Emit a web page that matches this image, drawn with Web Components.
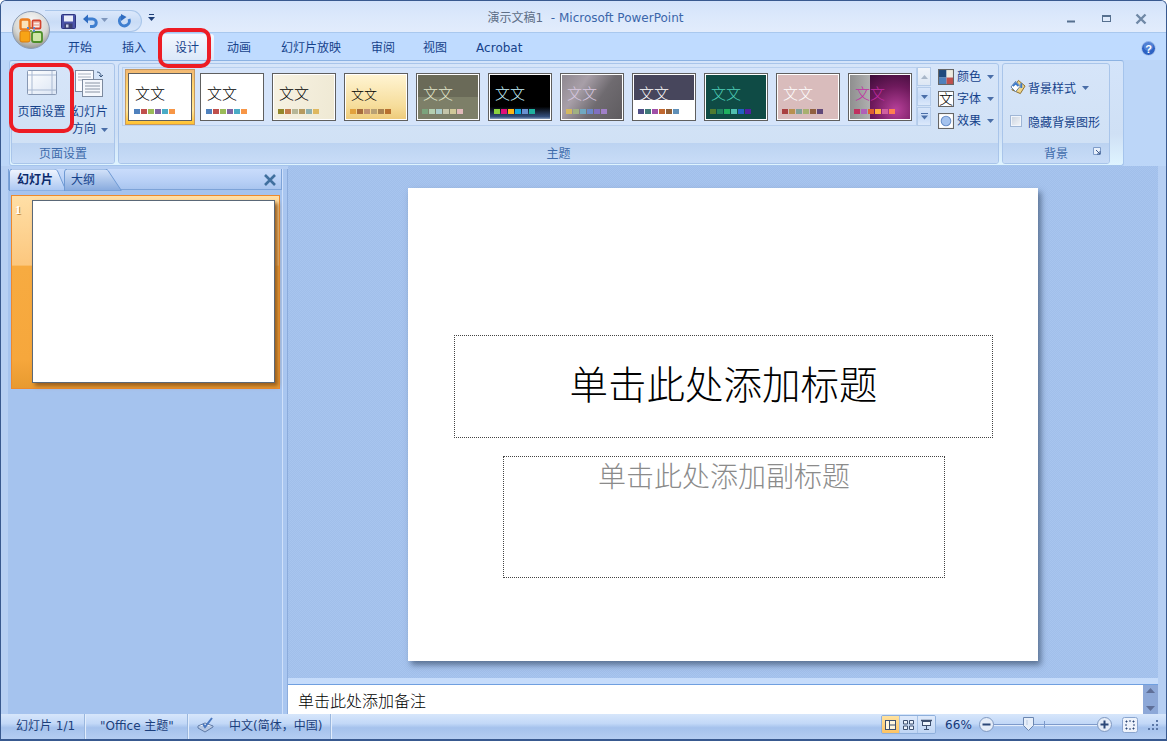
<!DOCTYPE html>
<html lang="zh-CN"><head><meta charset="utf-8"><title>演示文稿1 - Microsoft PowerPoint</title>
<style>html,body{margin:0;padding:0;background:#fff;overflow:hidden}body{font:12px "DejaVu Sans","Noto Sans CJK SC",sans-serif}</style>
</head><body>
<ppt-app></ppt-app>
<script>
const FONT='"DejaVu Sans","Noto Sans CJK SC",sans-serif';
function def(name,css,html,extra){
  const t=document.createElement('template');
  t.innerHTML='<style>'+css+'</style>'+html;
  customElements.define(name,class extends HTMLElement{
    constructor(){super();this.attachShadow({mode:'open'}).appendChild(t.content.cloneNode(true));}
    connectedCallback(){if(extra)extra(this);}
  });
}
const arrow='<svg width="7" height="4" viewBox="0 0 7 4"><path d="M0 0h7L3.5 4z" fill="#4a6ea8"/></svg>';

def('title-bar',`:host{display:grid;grid-template-columns:1fr auto 1fr;height:31px;align-items:center;background:linear-gradient(#d2e2fa,#dbe8fb 45%,#e2ecfc 100%);border-bottom:1px solid #a9c8ee;box-sizing:content-box;font-size:12px}
.t{color:#5d6e86;white-space:nowrap;padding:0 0 1px 4px}.t b{font-weight:400;color:#3b66aa}
.l{padding-left:44px;display:flex;align-items:center;gap:6px;align-self:end}
.q{display:flex;align-items:center;height:22px;width:97px;box-sizing:border-box;padding-left:16px;gap:0;border:1px solid #a9c6ea;border-left:0;border-radius:0 11px 11px 0;background:linear-gradient(#dbe8fb,#c9dcf6 55%,#d6e5fa);position:relative}
.r{display:flex;justify-content:flex-end;align-items:center;padding:5px 19px 0 0;gap:22px}`,
`<div class="l"><div class="q">
<svg width="15" height="15" viewBox="0 0 15 15" style="margin-right:7px"><rect x=".5" y=".5" width="14" height="14" rx="1" fill="#4b54a8" stroke="#2d3580"/><rect x="3" y="1.5" width="9" height="6" fill="#e9edf8"/><rect x="3.5" y="9.5" width="8" height="5" fill="#3a3f70"/><rect x="5" y="10.5" width="2.5" height="3" fill="#cdd3ea"/></svg>
<svg width="15" height="15" viewBox="0 0 15 15"><path d="M4 5h5.500a3.700 3.700 0 0 1 0 7.500H7" fill="none" stroke="#3f7fd0" stroke-width="3"/><path d="M0 5l5-4.500v9z" fill="#2f6cc0"/></svg>
<span style="margin:0 9px 2px 3px;display:flex">${arrow.replace('#4a6ea8','#7f97bd')}</span>
<svg width="15" height="15" viewBox="0 0 15 15"><path d="M5 2.500a5 5 0 1 0 7 2.500" fill="none" stroke="#3f7fd0" stroke-width="3"/><path d="M7 0v7L1.500 3z" fill="#2f6cc0" transform="matrix(-1 0 0 1 11 0)"/></svg>
</div>
<svg width="7" height="8" viewBox="0 0 7 8" style="margin-bottom:7px"><rect x="1" y="0" width="5" height="1" fill="#1f3f78"/><path d="M0 3h7L3.500 7z" fill="#1f3f78"/></svg></div>
<div class="t">演示文稿1 &nbsp;<b>- Microsoft PowerPoint</b></div>
<div class="r">
<svg width="12" height="12" viewBox="0 0 12 12"><rect x="1" y="7.500" width="8" height="2" fill="#56708f"/></svg>
<svg width="13" height="12" viewBox="0 0 13 12"><rect x="2.500" y="2.500" width="8" height="6" fill="#dfeafa" stroke="#56708f"/><rect x="2" y="2" width="9" height="2" fill="#56708f"/></svg>
<svg width="12" height="12" viewBox="0 0 12 12"><path d="M1.500 1.500l9 9M10.500 1.500l-9 9" stroke="#6f88a6" stroke-width="2.400"/></svg>
</div>`);

def('ribbon-tab',`:host{display:block;padding:4px 15px 0;line-height:23px;color:#15428b;font-size:12px;white-space:nowrap;height:27px;box-sizing:border-box}
:host([active]){background:linear-gradient(#f4f8fe,#dbe8f9);border-radius:3px 3px 0 0;margin-top:1px;padding-top:3px;height:26px}`,`<slot></slot>`);

def('tab-row',`:host{display:flex;align-items:flex-end;height:27px;padding-left:52px;background:#bfdbff;position:relative}
.h{margin-left:auto;margin-right:10px;margin-top:3px;align-self:center;display:flex}`,
`<slot></slot><svg class="h" width="15" height="15" viewBox="0 0 15 15"><circle cx="7.500" cy="7.500" r="7" fill="#2d62c4" stroke="#bcd3f2"/><circle cx="7.500" cy="5" r="5" fill="#6f9ae4" opacity=".55"/><text x="7.500" y="11.500" font-size="11" font-weight="700" font-family="Liberation Sans" text-anchor="middle" fill="#fff">?</text></svg>`);

def('ribbon-group',`:host{display:flex;flex-direction:column;box-sizing:border-box;height:101px;border:1px solid #a9c5ea;border-radius:3px;background:linear-gradient(#d6e5f9,#cfe0f4);position:relative;overflow:hidden}
.b{flex:1;min-height:0;display:flex}
.l{height:20px;box-sizing:border-box;padding-top:2px;line-height:19px;text-align:center;color:#3e6bab;font-size:12px;background:linear-gradient(#bcd3f1,#c8dcf7);flex:none}`,
`<div class="b"><slot></slot></div><div class="l"><slot name="label"></slot></div>`);

def('big-button',`:host{display:flex;flex-direction:column;align-items:center;padding-top:6px;color:#15428b;font-size:12px;line-height:17px;box-sizing:border-box;white-space:nowrap}
.i{height:27px;display:flex;margin-bottom:7px}`,`<div class="i"><slot name="icon"></slot></div><slot></slot>`);

def('theme-thumb',`:host{display:block;flex:none;width:64px;height:48px;box-sizing:border-box;border:1px solid #5f5f5f;padding:1px;background:#fff;position:relative}
:host([selected])::before{content:"";position:absolute;inset:-5px -4px -5px -4px;background:linear-gradient(#f2b873,#ffd56e 30%,#ffe59a 75%,#ffc12e);border:1px solid #c69a62;box-sizing:border-box;z-index:-1}
.p{height:44px;box-sizing:border-box;padding:11px 4px 0 4px;overflow:hidden;background:var(--bg,#fff);position:relative}
.x{font-size:var(--fs,15px);line-height:17px;height:17px;margin-left:1px;color:var(--ink,#000);white-space:nowrap;position:relative;font-weight:300}
.s{display:flex;gap:1px;margin:6px 0 0 0;position:relative}
i{display:block;width:6px;height:5px}`,
`<div class="p"><div class="x">文文</div><div class="s"></div></div>`,
el=>{const r=el.shadowRoot;const c=(el.getAttribute('sw')||'').split(',');
 r.querySelector('.s').innerHTML=c.map(v=>'<i style="background:'+v+'"></i>').join('');
 const p=r.querySelector('.p');p.style.setProperty('--bg',el.getAttribute('bg')||'#fff');
 p.style.setProperty('--ink',el.getAttribute('ink')||'#000');
 if(el.getAttribute('fs'))p.style.setProperty('--fs',el.getAttribute('fs'));
});

def('scroll-btns',`:host{display:flex;flex-direction:column;width:14px;height:59px;gap:1px;flex:none}
div{flex:1;box-sizing:border-box;border:1px solid #b4cbe9;display:flex;align-items:center;justify-content:center;background:linear-gradient(#d8e6fa,#c6daf6 55%,#dce9fb)}
.a{background:linear-gradient(#f0f4fa,#dde7f4)}
svg{display:block}`,
`<div class="a"><svg width="7" height="4"><path d="M0 4h7L3.500 0z" fill="#a9b7c9"/></svg></div>
<div><svg width="7" height="4"><path d="M0 0h7L3.500 4z" fill="#4a6ea8"/></svg></div>
<div><svg width="7" height="7"><rect width="7" height="1" fill="#4a6ea8"/><path d="M0 2.500h7L3.500 6.500z" fill="#4a6ea8"/></svg></div>`);

def('theme-opt',`:host{display:flex;align-items:center;height:17px;margin-bottom:5px;color:#15428b;font-size:12px;white-space:nowrap}
.t{margin:0 0 3px 3px;width:24px}.a{margin-left:6px;display:flex}`,
`<slot name="icon"></slot><span class="t"><slot></slot></span><span class="a">${arrow}</span>`);

def('panel-tab',`:host{display:block;position:relative;height:21px;box-sizing:border-box;line-height:23px;font-size:12px;padding-left:8px;color:#15428b;flex:none}
svg{position:absolute;left:0;top:0;z-index:-1}
:host([active]){font-weight:700;color:#0c2a6c}`,`<svg width="70" height="22" viewBox="0 0 70 22"><path class="p" d="M.5 22V3a3 3 0 0 1 3-3H40c3 0 4 1 5 3l12 18v1z" fill="url(#g)" stroke="#6f9ad4"/><defs><linearGradient id="g" x1="0" y1="0" x2="0" y2="1"><stop class="a" offset="0"/><stop class="b" offset="1"/></linearGradient></defs></svg><slot></slot>`,
el=>{const r=el.shadowRoot,on=el.hasAttribute('active');
 r.querySelector('.a').setAttribute('stop-color',on?'#f2f6fe':'#d5e4fa');
 r.querySelector('.b').setAttribute('stop-color',on?'#a9c6f2':'#86a9dd');
 if(on)r.querySelector('.p').setAttribute('d','M.5 22V3a3 3 0 0 1 3-3H45c2 0 3 1 4 3l6 14c1 2 3 4 7 5z');
});

def('slide-panel',`:host{display:flex;flex-direction:column;width:274px;flex:none;background:#a5c3ee;position:relative}
.tabs{display:flex;height:21px;box-sizing:border-box;background:linear-gradient(#c9dcfb,#b8d0f6 60%,#a9c5ef);border:1px solid #7da3d8;border-width:0 1px 1px 1px;position:relative;z-index:0;align-items:flex-start;flex:none}
.x{margin:5px 5px 0 auto;display:flex}
.thumb{margin:5px 2px 0 3px;height:194px;box-sizing:border-box;border:1px solid #ee8a2c;background:linear-gradient(#ffdfa6,#fcc77e 36%,#f7ab41 36.500%,#f6a73c 85%,#e89a30);display:flex;padding:4px 4px 0 3px;position:relative;flex:none}
.n{width:17px;color:#fff;font:700 12px/20px "Liberation Serif",serif;text-shadow:1px 1px 0 #c98a3a;flex:none}
.s{width:243px;height:183px;box-sizing:border-box;background:#fff;border:1px solid #5a6878;box-shadow:3px 3px 4px #9a5f1e}`,
`<div class="tabs"><panel-tab active style="width:55px">幻灯片</panel-tab><panel-tab style="width:58px;padding-left:7px">大纲</panel-tab>
<svg class="x" width="12" height="12" viewBox="0 0 12 12"><path d="M1 1l10 10M11 1L1 11" stroke="#40709f" stroke-width="2.600"/></svg></div>
<div class="thumb"><div class="n">1</div><div class="s"></div></div>`);

def('pane-divider',`:host{display:block;width:6px;flex:none;box-sizing:border-box;background:#a9c6f0;border-left:1px solid #cfe0fa;border-right:1px solid #8cacdc}`,``);

def('slide-canvas',`:host{display:block;flex:1;min-height:0;padding-top:22px;box-sizing:border-box;background:#a3c1ec repeating-conic-gradient(#a1bfea 0 25%,#a8c5ef 0 50%) 0 0/2px 2px}
.s{width:630px;height:473px;margin:0 auto;background:#fff;box-shadow:3px 4px 6px rgba(50,70,100,.65);display:flex;flex-direction:column;padding-top:147px;box-sizing:border-box}
.a,.b{border:1px dotted #444;box-sizing:border-box;text-align:center;white-space:nowrap}
.a{margin-left:46px;width:539px;height:103px;line-height:100px;font-size:38.500px;color:#000;font-weight:300}
.b{margin:18px 0 0 95px;width:442px;height:122px;font-size:28px;line-height:42px;color:#8b8b8b;font-weight:300}`,
`<div class="s"><div class="a">单击此处添加标题</div><div class="b">单击此处添加副标题</div></div>`);

def('notes-pane',`:host{display:flex;height:36px;flex:none;flex-direction:column}
.d{height:7px;box-sizing:border-box;background:#c6dcfb;border-bottom:1px solid #6f9fe0}
.m{flex:1;display:flex;min-height:0}
.t{flex:1;background:#fff;font-size:16px;line-height:33px;padding-left:10px;color:#000;font-weight:300;overflow:hidden}
.v{width:15px;background:#8da8d8;display:flex;flex-direction:column;align-items:center;justify-content:space-between;padding:3px 0;box-sizing:border-box}`,
`<div class="d"></div><div class="m"><div class="t">单击此处添加备注</div><div class="v"><svg width="9" height="5"><path d="M0 5h9L4.500 0z" fill="#5f6f98"/></svg><svg width="9" height="5"><path d="M0 0h9L4.500 5z" fill="#5f6f98"/></svg></div></div>`);

def('status-cell',`:host{display:flex;align-items:center;box-sizing:border-box;height:100%;padding-bottom:4px;border-right:1px solid #9ab7de;box-shadow:1px 0 0 #e2edfc;color:#1c3f7c;font-size:12px;white-space:nowrap;flex:none}`,`<slot></slot>`);

def('status-bar',`:host{display:flex;height:27px;flex:none;box-sizing:border-box;border-bottom:2px solid #38598f;background:linear-gradient(#d7e6fb,#c2d8f7 38%,#a5c2ec 55%,#b4cdf2);font-size:12px;align-items:stretch}
.r{margin-left:auto;display:flex;align-items:center;padding:0 8px 4px 0;color:#15387a}
.v{display:flex;height:19px;width:55px;border:1px solid #8fb0dc;border-radius:2px;box-sizing:border-box;margin-right:9px;overflow:hidden}
.v span{flex:1;display:flex;align-items:center;justify-content:center;border-right:1px solid #a6c2e6;background:linear-gradient(#dfeafb,#bfd5f4)}
.v span:first-child{background:linear-gradient(#ffe3a0,#fcc262)}
.v span:last-child{border:0}
.p{width:27px;margin-right:7px;letter-spacing:.1px}
.z{display:flex;align-items:center;position:relative}
.tr{width:105px;height:1px;background:#7d9acb;position:relative;margin:0 -1px;box-shadow:0 1px 0 #e4eefc}
.tk{position:absolute;left:51px;top:-3px;width:1px;height:7px;background:#7d9acb}
.th{position:absolute;left:30px;top:-7px}
.f{margin:0 9px 0 10px;display:flex}
.g{display:flex}`,
`<slot></slot>
<div class="r">
<div class="v"><span><svg width="11" height="10"><rect x=".5" y=".5" width="10" height="9" fill="#fff6dc" stroke="#3d4f6e"/><path d="M4.500 0v10M4.500 5H11" stroke="#3d4f6e"/></svg></span>
<span><svg width="11" height="10"><path d="M.5.500h4v3.500h-4zM6.500.500h4v3.500h-4zM.5 6h4v3.500h-4zM6.500 6h4v3.500h-4z" fill="#eef4fc" stroke="#3d4f6e"/></svg></span>
<span><svg width="11" height="11"><path d="M0 1.500h11" stroke="#3d4f6e" stroke-width="1.600"/><rect x="1.500" y="2.500" width="8" height="4" fill="#eef4fc" stroke="#3d4f6e"/><path d="M5.500 7v3M3 10.500h5" stroke="#3d4f6e"/></svg></span></div>
<span class="p">66%</span>
<div class="z">
<svg width="15" height="15" style="position:relative;z-index:1"><circle cx="7.500" cy="7.500" r="7" fill="#e4ecf8" stroke="#7f98c0"/><rect x="3.500" y="6.500" width="8" height="2" fill="#2c4878"/></svg>
<div class="tr"><div class="tk"></div><svg class="th" width="11" height="14" viewBox="0 0 11 14"><path d="M.5.500h10v8l-5 5-5-5z" fill="#e6eef9" stroke="#6b86b0"/><path d="M4 3v5" stroke="#b8c8e0"/></svg></div>
<svg width="15" height="15" style="position:relative;z-index:1"><circle cx="7.500" cy="7.500" r="7" fill="#e4ecf8" stroke="#7f98c0"/><path d="M3.500 7.500h8M7.500 3.500v8" stroke="#2c4878" stroke-width="2"/></svg>
</div>
<span class="f"><svg width="16" height="16"><rect x=".5" y=".5" width="15" height="15" rx="2" fill="#eef3fb" stroke="#8ba6cf"/><path d="M8 3v2M8 11v2M3 8h2M11 8h2M4 4h1v1H4zM11 4h1v1h-1zM4 11h1v1H4zM11 11h1v1h-1z" stroke="#2c4878"/></svg></span>
<span class="g"><svg width="11" height="11"><path d="M9 1h2v2H9zM9 5h2v2H9zM9 9h2v2H9zM5 5h2v2H5zM5 9h2v2H5zM1 9h2v2H1z" fill="#5a78a8"/></svg></span>
</div>`);

def('red-mark',`:host{display:block;position:absolute;box-sizing:border-box;border:4px solid #ed1c24;border-radius:10px;pointer-events:none;z-index:5}`,``);

def('office-orb',`:host{display:block;position:absolute;left:11px;top:10px;width:38px;height:38px;z-index:4}`,
`<svg width="38" height="38" viewBox="0 0 38 38"><defs><radialGradient id="o" cx=".5" cy=".3" r=".75"><stop offset="0" stop-color="#fafafa"/><stop offset=".6" stop-color="#d8d8d4"/><stop offset="1" stop-color="#8b8b86"/></radialGradient></defs>
<circle cx="19" cy="19" r="18.500" fill="url(#o)" stroke="#8a9bb4"/>
<rect x="8.500" y="8.500" width="9" height="10" rx="2" fill="#fbe3b8" stroke="#ec7d1e" stroke-width="2.400"/>
<rect x="20.500" y="9.500" width="8" height="8" rx="1" fill="#fbeee6" stroke="#d2442e" stroke-width="1.800"/>
<rect x="8" y="20" width="10" height="11" rx="2" fill="#f7a416" stroke="#d77a10"/>
<rect x="20" y="21" width="10" height="10" rx="2" fill="#cfe6a8" stroke="#4d8e2a" stroke-width="1.800"/>
<path d="M21 11h6M21 14h6" stroke="#e08a78"/><rect x="15" y="16" width="2" height="2" fill="#5b89c8"/><rect x="18" y="16" width="2" height="2" fill="#c9703c"/><rect x="21" y="16" width="2" height="2" fill="#5b89c8"/><rect x="18" y="19" width="2" height="2" fill="#7aa84a"/><rect x="21" y="19" width="2" height="2" fill="#5b89c8"/></svg>`);

def('ppt-app',`:host{display:flex;flex-direction:column;width:1167px;height:741px;box-sizing:border-box;border:1px solid #38598f;border-bottom:0;border-radius:6px 6px 0 0;overflow:hidden;background:#bcd6f8;position:relative;font-family:${FONT}}
.rb{height:106px;margin:0 42px 0 8px;flex:none;box-sizing:border-box;border:1px solid #a5c4ec;border-top-color:#8db3e2;border-radius:3px;background:linear-gradient(#d4e4fa,#cfe0f5 70%,#dff4ff);display:flex;padding:2px 0 0 1px;gap:3px}
.ws{flex:1;min-height:0;display:flex;padding:3px 8px 0 7px;background:#b6cff3}
.mn{flex:1;min-width:0;display:flex;flex-direction:column;margin-top:-3px}
.gal{margin:3px 0 0 3px;width:795px;height:59px;box-sizing:border-box;border:1px solid #b9d0ee;background:#d5e4fa;display:flex;gap:8px;padding:5px 0 0 5px;position:relative;z-index:0}
.opts{margin:4px 0 0 7px;width:58px}
.ic{display:block;width:16px;height:16px;flex:none}
.bgw{padding:15px 0 0 7px;color:#15428b;white-space:nowrap;font-size:12px}
.bgr{display:flex;align-items:center;height:16px}
.bgr .t{margin-left:2px}
.ck{display:block;width:12px;height:12px;box-sizing:border-box;border:1px solid #9fb6d6;background:linear-gradient(135deg,#c9d2de,#f5f7fa);box-shadow:inset 0 0 0 1px #f1f5fb;margin-right:6px}
.lch{position:absolute;right:7px;bottom:7px;display:block}`,
`<title-bar></title-bar>
<tab-row><ribbon-tab>开始</ribbon-tab><ribbon-tab>插入</ribbon-tab><ribbon-tab active style="margin-left:-1px">设计</ribbon-tab><ribbon-tab style="margin-left:-2px">动画</ribbon-tab><ribbon-tab>幻灯片放映</ribbon-tab><ribbon-tab>审阅</ribbon-tab><ribbon-tab style="margin-left:-2px">视图</ribbon-tab><ribbon-tab style="margin-left:-1px">Acrobat</ribbon-tab></tab-row>
<div class="rb">
 <ribbon-group style="width:104px"><span slot="label">页面设置</span>
  <big-button style="width:59px"><svg slot="icon" width="30" height="27" viewBox="0 0 30 27"><defs><linearGradient id="pg" x1="0" y1="0" x2="1" y2="1"><stop offset="0" stop-color="#fff"/><stop offset="1" stop-color="#dbe5f4"/></linearGradient></defs><rect x=".5" y=".5" width="29" height="24" rx="1" fill="url(#pg)" stroke="#8798b3"/><path d="M1 5h28M1 20h28M5 1v23M25 1v23" stroke="#a9b9d2"/></svg>页面设置</big-button>
  <big-button style="width:38px"><svg slot="icon" width="30" height="27" viewBox="0 0 30 27"><rect x=".5" y=".5" width="18" height="21" fill="#fbfcff" stroke="#7c8a9f"/><path d="M3 4h13M3 7h13M3 10h13" stroke="#a8b2c0"/><rect x="7.500" y="9.500" width="20" height="17" fill="#f5f8fd" stroke="#7c8a9f"/><path d="M10 13h15M10 16h15M10 19h15M10 22h15" stroke="#8a94a4"/><path d="M22 2c3 0 4 2 4 4M24 5l2 2 2-2" fill="none" stroke="#3d5a80"/></svg>幻灯片<span style="display:flex;align-items:center;gap:5px">方向 ${arrow}</span></big-button>
 </ribbon-group>
 <ribbon-group style="width:881px"><span slot="label">主题</span>
  <div class="gal">
   <theme-thumb selected sw="#4f81bd,#c0504d,#9bbb59,#8064a2,#4bacc6,#f79646"></theme-thumb>
   <theme-thumb sw="#4f81bd,#c0504d,#9bbb59,#8064a2,#4bacc6,#f79646"></theme-thumb>
   <theme-thumb bg="linear-gradient(100deg,#f7f2e2,#efe9d4)" sw="#93882b,#c27c4c,#b7b798,#b79a5f,#8fb0ae,#dfb85f"></theme-thumb>
   <theme-thumb bg="linear-gradient(#fff4d2,#f6dd9b 70%,#eecb7b)" sw="#e2a23e,#a86c3c,#c09172,#b9a173,#a98250,#b8702e" fs="13px"></theme-thumb>
   <theme-thumb bg="linear-gradient(#6a6a58 0 22px,#7d7f68 22px)" ink="#e3e8cc" sw="#7ba37c,#b4cfb1,#a9cbca,#c4c4a9,#cfc899,#e2baba"></theme-thumb>
   <theme-thumb bg="linear-gradient(#000 72%,#34507e 95%,#8aa0c0)" ink="#c9f5ff" sw="#8bd23f,#e0107a,#fdb515,#10a8e0,#6a8fd0,#1fb09e"></theme-thumb>
   <theme-thumb bg="linear-gradient(125deg,#8f8890,#a89fa8 30%,#6f6b70 60%,#5f5c60)" ink="#d9c9e2" sw="#d4b860,#a0b082,#70a8c0,#6a88c8,#8070c0,#a080c8"></theme-thumb>
   <theme-thumb bg="linear-gradient(#47465c 0 25px,#fff 25px)" ink="#fff" sw="#504f88,#3f7a78,#a050a8,#c06830,#906038,#6090b8"></theme-thumb>
   <theme-thumb bg="#0f4b45" ink="#4fd2ba" sw="#507a30,#208060,#20b060,#50c0b0,#2060c0,#5020a0"></theme-thumb>
   <theme-thumb bg="#d9bcbc" ink="#fff" sw="#a84040,#b89050,#80a098,#a8b070,#906040,#604878"></theme-thumb>
   <theme-thumb bg="radial-gradient(circle at 65% 80%,#b8409a,#6e1a5c 55%,#3c0c38) 20px 0/40px 100% no-repeat,linear-gradient(90deg,#8f8f8f,#f0f0f0)" ink="#c22ca4" sw="#c03060,#b060b8,#e06030,#ffb040,#d060a0,#ff8050"></theme-thumb>
  </div>
  <scroll-btns style="margin-top:3px"></scroll-btns>
  <div class="opts">
   <theme-opt><svg slot="icon" class="ic" viewBox="0 0 15 15"><rect width="8" height="8" fill="#1f497d"/><rect x="8" width="7" height="8" fill="#eeece1"/><rect y="8" width="8" height="7" fill="#4f81bd"/><rect x="8" y="8" width="7" height="7" fill="#c0504d"/><rect x=".5" y=".5" width="14" height="14" fill="none" stroke="#666"/></svg>颜色</theme-opt>
   <theme-opt><span slot="icon" class="ic" style="box-sizing:border-box;border:1px solid #666;background:#fff;color:#000;font-size:14px;line-height:14px;text-align:center;overflow:hidden;font-weight:300">文</span>字体</theme-opt>
   <theme-opt><svg slot="icon" class="ic" viewBox="0 0 15 15"><rect x=".5" y=".5" width="14" height="14" fill="#fff" stroke="#666"/><circle cx="7.500" cy="7.500" r="4.500" fill="#a5c3ee" stroke="#6a8fc8"/></svg>效果</theme-opt>
  </div>
 </ribbon-group>
 <ribbon-group style="width:108px"><span slot="label">背景</span>
  <div class="bgw">
   <div class="bgr"><svg width="16" height="16" viewBox="0 0 17 16"><path d="M9 1l7 6-5 8-9-4z" fill="#f0d68a" stroke="#8a6a28"/><path d="M1 8l5-6 5 5-5 6z" fill="#fff" stroke="#5a7aa0"/><path d="M3 7l3-3 3 3" fill="none" stroke="#3a78c8" stroke-width="2"/><path d="M12 4v5" stroke="#3a78c8" stroke-width="2"/></svg><span class="t">背景样式</span><span style="margin-left:6px;display:flex;margin-top:1px">${arrow}</span></div>
   <div class="bgr" style="margin-top:18px"><span class="ck"></span>隐藏背景图形</div>
  </div>
  <svg slot="label" class="lch" width="9" height="9" viewBox="0 0 9 9"><path d="M.5.500h7v7h-7z" fill="#e8f0fb" stroke="#7f9cc8"/><path d="M3 3l4 4M7 4v3H4" fill="none" stroke="#3d5a8c"/></svg>
 </ribbon-group>
</div>
<div class="ws"><slide-panel></slide-panel><pane-divider></pane-divider><div class="mn"><slide-canvas></slide-canvas><notes-pane></notes-pane></div></div>
<status-bar>
 <status-cell style="width:84px;padding-left:15px">幻灯片 1/1</status-cell>
 <status-cell style="width:103px;padding-left:15px">"Office 主题"</status-cell>
 <status-cell style="width:143px;padding-left:9px"><svg width="18" height="16" viewBox="0 0 18 16" style="margin-right:14px"><path d="M1 9l7-3 8 3-8 5z" fill="#f4f7fc" stroke="#5f7aa6"/><path d="M1 9v2l7 4 8-5V9" fill="#b6c8e4" stroke="#5f7aa6"/><path d="M6 7l2 3 7-9" fill="none" stroke="#4a78c0" stroke-width="2"/></svg>中文(简体，中国)</status-cell>
</status-bar>
<office-orb></office-orb>
<red-mark style="left:157px;top:27px;width:53px;height:40px"></red-mark>
<red-mark style="left:8px;top:62px;width:65px;height:70px"></red-mark>`);
</script>
</body></html>
